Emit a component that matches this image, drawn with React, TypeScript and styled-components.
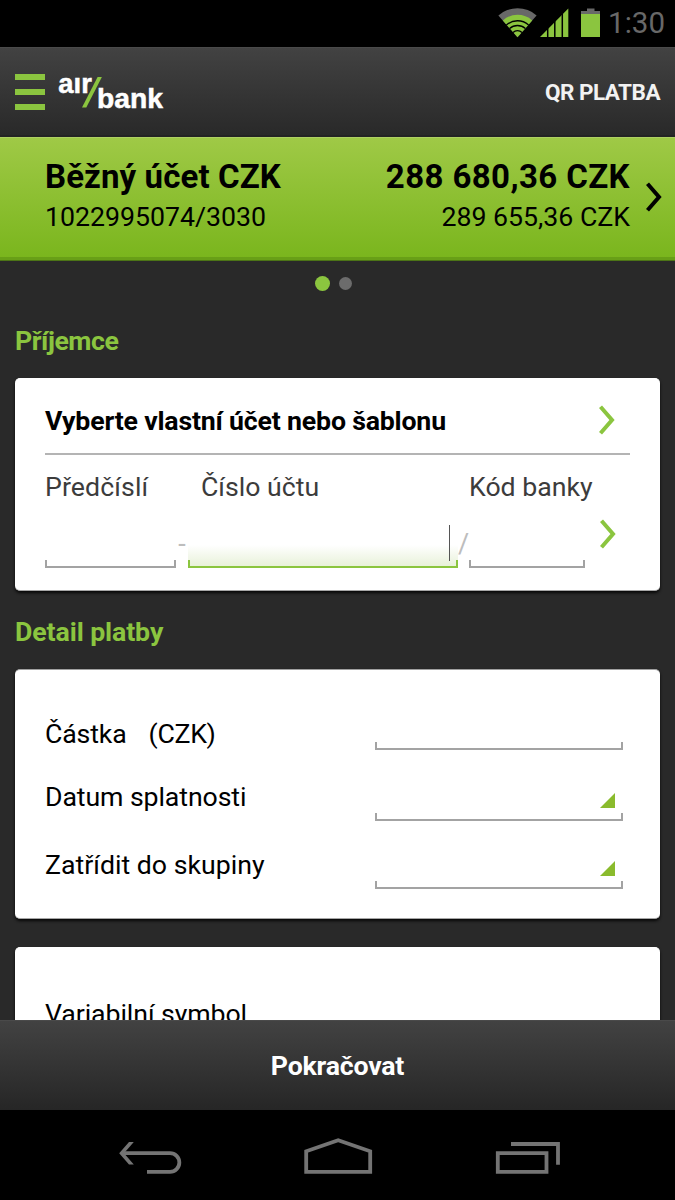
import React from 'react';
import styled, { createGlobalStyle } from 'styled-components';

const GREEN = '#8bc53f';

const GlobalStyle = createGlobalStyle`
  * { box-sizing: border-box; }
  body { margin: 0; background: #292929; }
`;

const Screen = styled.div`
  width: 675px;
  height: 1200px;
  display: flex;
  flex-direction: column;
  overflow: hidden;
  background: #292929;
  font-family: Roboto, 'Liberation Sans', sans-serif;
  color: #000;
`;

const Text = styled.span<{ $size?: number; $track?: number; $bold?: boolean; $color?: string }>`
  display: block;
  white-space: pre;
  line-height: 32px;
  font-size: ${(p) => p.$size ?? 26.7}px;
  font-weight: ${(p) => (p.$bold ? 700 : 400)};
  letter-spacing: ${(p) => p.$track ?? 0}px;
  color: ${(p) => p.$color ?? '#000'};
`;

const StatusBar = styled.div`
  height: 47px;
  flex: none;
  display: flex;
  justify-content: flex-end;
  padding: 7px 10px 0 0;
  background: #000;
`;

const StatusIcons = styled.svg`
  display: block;
  margin-right: 6px;
`;

const Header = styled.header`
  height: 90px;
  flex: none;
  display: flex;
  align-items: center;
  padding: 0 15px;
  background: linear-gradient(#424242, #292929);
  border-top: 1px solid #4a4a4a;
  border-bottom: 2px solid #232323;
`;

const MenuButton = styled.div`
  width: 30px;
  display: grid;
  gap: 9px;
  margin-top: 1px;
`;

const MenuBar = styled.span`
  height: 6px;
  background: ${GREEN};
`;

const Logo = styled.svg`
  display: block;
  margin: 1px auto 0 9px;
`;

const Account = styled.section`
  height: 124px;
  flex: none;
  display: flex;
  padding: 23px 13px 0 45px;
  background: linear-gradient(#9fc946, #79b51c);
  border-top: 1px solid #aed062;
  box-shadow: inset 0 -1px 0 #4c7416, inset 0 -4px 0 #689f17;
`;

const AccountColumn = styled.div<{ $end?: boolean }>`
  display: grid;
  row-gap: 8px;
  align-content: start;
  justify-items: ${(p) => (p.$end ? 'end' : 'start')};
  margin-left: ${(p) => (p.$end ? 'auto' : '0')};
  margin-right: ${(p) => (p.$end ? '16px' : '0')};
`;

const ChevronIcon = styled.svg<{ $top?: number }>`
  display: block;
  flex: none;
  margin-top: ${(p) => p.$top ?? 0}px;
`;

const Content = styled.main`
  flex: 1;
  min-height: 0;
  overflow: hidden;
  padding: 0 15px;
`;

const Pager = styled.div`
  height: 44px;
  display: flex;
  align-items: center;
  justify-content: center;
  gap: 9px;
  padding-right: 8px;
`;

const Dot = styled.span<{ $active?: boolean }>`
  width: ${(p) => (p.$active ? 15 : 13)}px;
  height: ${(p) => (p.$active ? 15 : 13)}px;
  border-radius: 50%;
  background: ${(p) => (p.$active ? GREEN : '#6c6c6c')};
`;

const SectionTitle = styled.h2<{ $top: number }>`
  margin: ${(p) => p.$top}px 0 21px;
`;

const Card = styled.section<{ $height: number; $edge: string; $gap?: number }>`
  height: ${(p) => p.$height}px;
  margin-top: ${(p) => p.$gap ?? 0}px;
  padding: 0 30px;
  background: #fff;
  border-top: 1px solid ${(p) => p.$edge};
  border-bottom: 1px solid #a6a6a6;
  border-radius: 5px;
  box-shadow: 0 2px 3px #080808;
`;

const ChooseRow = styled.div`
  height: 76px;
  display: flex;
  justify-content: space-between;
  padding: 26px 15px 0 0;
  border-bottom: 2px solid #b4b4b4;
`;

const NumberLabels = styled.div`
  display: grid;
  grid-template-columns: 156px 268px auto;
  padding-top: 16px;
`;

const NumberFields = styled.div`
  display: flex;
  height: 49px;
  margin-top: 16px;
`;

const Field = styled.div<{ $width: number; $focus?: boolean }>`
  width: ${(p) => p.$width}px;
  height: 23px;
  flex: none;
  align-self: flex-end;
  display: flex;
  align-items: flex-end;
  background: ${(p) =>
    p.$focus ? 'linear-gradient(#fff, #e6f0d6)' : '#fff'};

  &::before {
    content: '';
    flex: 1;
    height: 6px;
    border: 2px solid ${(p) => (p.$focus ? GREEN : '#a3a3a3')};
    border-top: 0;
  }
`;

const Caret = styled.span`
  width: 1px;
  height: 36px;
  margin: 6px 8px 0 -9px;
  background: #555;
`;

const Separator = styled.span<{ $width: number }>`
  width: ${(p) => p.$width}px;
  flex: none;
  display: flex;
  justify-content: center;
  font-size: 27px;
  line-height: 32px;
  padding-top: 9px;
  color: #bdbdbd;
`;

const BankPicker = styled.div`
  margin-left: 15px;
`;

const DetailRow = styled.div<{ $top: number }>`
  display: flex;
  justify-content: space-between;
  padding: 0 7px 0 0;
  margin-top: ${(p) => p.$top}px;
  height: 32px;
`;

const AmountLabel = styled.div`
  display: flex;
  gap: 22px;
`;

const Spinner = styled.div<{ $drop: number }>`
  width: 248px;
  height: 8px;
  flex: none;
  margin-top: ${(p) => p.$drop}px;
  border: 2px solid #a3a3a3;
  border-top: 0;
`;

const Triangle = styled.svg`
  display: block;
  margin: -20px 6px 0 auto;
`;

const Footer = styled.footer`
  height: 90px;
  flex: none;
  display: flex;
  justify-content: center;
  padding-top: 29px;
  background: linear-gradient(#424242, #262626);
  border-top: 1px solid #4a4a4a;
`;

const NavBar = styled.nav`
  height: 90px;
  flex: none;
  display: flex;
  justify-content: space-between;
  padding: 27px 115px 0 118px;
  background: #000;
`;

const Chevron = ({ color = GREEN, top }: { color?: string; top?: number }) => (
  <ChevronIcon $top={top} width="16" height="30" viewBox="0 0 16 30">
    <path d="M1.5 1.8 L13 15 L1.5 28.2" fill="none" stroke={color} strokeWidth="4" />
  </ChevronIcon>
);

const Corner = () => (
  <Triangle width="15" height="15">
    <path d="M15 0V15H0Z" fill="#8abb2d" />
  </Triangle>
);

export default function App() {
  return (
    <Screen>
      <GlobalStyle />
      <StatusBar>
        <StatusIcons width="104" height="32" viewBox="498 7 104 32">
          <path d="M517.5 37.2 L498.4 15.4 A29 29 0 0 1 536.6 15.4 Z" fill="#686868" />
          <path d="M517.5 37.2 L502.8 20.4 A22.3 22.3 0 0 1 532.2 20.4 Z" fill={GREEN} />
          <g fill="none" stroke="#000" strokeWidth="1.3">
            <path d="M506.4 25 A16.6 16.6 0 0 1 528.6 25" />
            <path d="M509.6 28.6 A11.6 11.6 0 0 1 525.4 28.6" />
            <path d="M513 32.4 A6.6 6.6 0 0 1 522 32.4" />
          </g>
          <path d="M540 37 L568.3 8.5 V37 Z" fill={GREEN} />
          <path d="M547.7 8V38M554.8 8V38M562.3 8V38" stroke="#000" strokeWidth="1.5" />
          <path d="M587 8.5h7.5V11H600v3H581v-3h6z" fill="#686868" />
          <path d="M581 14h19v23h-19z" fill={GREEN} />
        </StatusIcons>
        <Text $size={29.5} $color="#686868">1:30</Text>
      </StatusBar>

      <Header>
        <MenuButton>
          <MenuBar />
          <MenuBar />
          <MenuBar />
        </MenuButton>
        <Logo width="118" height="60" viewBox="54 62 118 60">
          <g
            fill="#fff"
            stroke="#fff"
            strokeWidth="0.5"
            fontFamily="'Liberation Sans', sans-serif"
            fontWeight="700"
            fontSize="28"
          >
            <text x="58.3" y="92.5" textLength="33.5" lengthAdjust="spacingAndGlyphs">aır</text>
            <text x="97" y="107.5" textLength="66" lengthAdjust="spacingAndGlyphs">bank</text>
          </g>
          <path d="M82 107.5 L97.6 77 H101.9 L86.3 107.5 Z" fill={GREEN} />
        </Logo>
        <Text $size={22.5} $track={-0.5} $bold $color="#f2f2f2">QR PLATBA</Text>
      </Header>

      <Account>
        <AccountColumn>
          <Text $size={33} $track={0.1} $bold>Běžný účet CZK</Text>
          <Text>1022995074/3030</Text>
        </AccountColumn>
        <AccountColumn $end>
          <Text $size={33} $track={0.4} $bold>288 680,36 CZK</Text>
          <Text>289 655,36 CZK</Text>
        </AccountColumn>
        <Chevron color="#000" top={21} />
      </Account>

      <Content>
        <Pager>
          <Dot $active />
          <Dot />
        </Pager>

        <SectionTitle $top={20}>
          <Text $bold $track={-0.45} $color={GREEN}>Příjemce</Text>
        </SectionTitle>
        <Card $height={213} $edge="#fff">
          <ChooseRow>
            <Text $bold $track={-0.19}>Vyberte vlastní účet nebo šablonu</Text>
            <Chevron />
          </ChooseRow>
          <NumberLabels>
            <Text $track={0.1} $color="#3c3c3c">Předčíslí</Text>
            <Text $color="#3c3c3c">Číslo účtu</Text>
            <Text $color="#3c3c3c">Kód banky</Text>
          </NumberLabels>
          <NumberFields>
            <Field $width={131} />
            <Separator $width={12}>-</Separator>
            <Field $width={270} $focus />
            <Caret />
            <Separator $width={11}>/</Separator>
            <Field $width={116} />
            <BankPicker>
              <Chevron />
            </BankPicker>
          </NumberFields>
        </Card>

        <SectionTitle $top={25}>
          <Text $bold $track={-0.1} $color={GREEN}>Detail platby</Text>
        </SectionTitle>
        <Card $height={250} $edge="#a0a0a0">
          <DetailRow $top={48}>
            <AmountLabel>
              <Text $track={-0.15}>Částka</Text>
              <Text $track={-0.3}>(CZK)</Text>
            </AmountLabel>
            <Spinner $drop={24} />
          </DetailRow>
          <DetailRow $top={31}>
            <Text $track={-0.1}>Datum splatnosti</Text>
            <Spinner $drop={32}><Corner /></Spinner>
          </DetailRow>
          <DetailRow $top={36}>
            <Text>Zatřídit do skupiny</Text>
            <Spinner $drop={32}><Corner /></Spinner>
          </DetailRow>
        </Card>

        <Card $height={200} $edge="#fff" $gap={28}>
          <DetailRow $top={50}>
            <Text $track={-0.08}>Variabilní symbol</Text>
          </DetailRow>
        </Card>
      </Content>

      <Footer>
        <Text $bold $track={-0.2} $color="#fff">Pokračovat</Text>
      </Footer>

      <NavBar>
        <svg width="64" height="38" viewBox="118 1137 64 38" fill="none" stroke="#747474">
          <path d="M122 1153.2H170a9.3 9.3 0 0 1 0 18.7H147" strokeWidth="3.8" />
          <path d="M129 1142h4.8L124 1153.2l9.8 11.2H129L119.2 1153.2Z" fill="#747474" stroke="none" />
        </svg>
        <svg width="70" height="38" viewBox="303 1137 70 38" fill="none" stroke="#747474" strokeWidth="3.8">
          <path d="M306.2 1171.9V1151.3L338.2 1140.2L370.2 1151.3V1171.9Z" />
        </svg>
        <svg width="66" height="38" viewBox="494 1137 66 38" fill="none" stroke="#747474" strokeWidth="3.8">
          <path d="M497.8 1153.1H546.5V1171.9H497.8Z" />
          <path d="M511 1144H558V1164.7" />
        </svg>
      </NavBar>
    </Screen>
  );
}
